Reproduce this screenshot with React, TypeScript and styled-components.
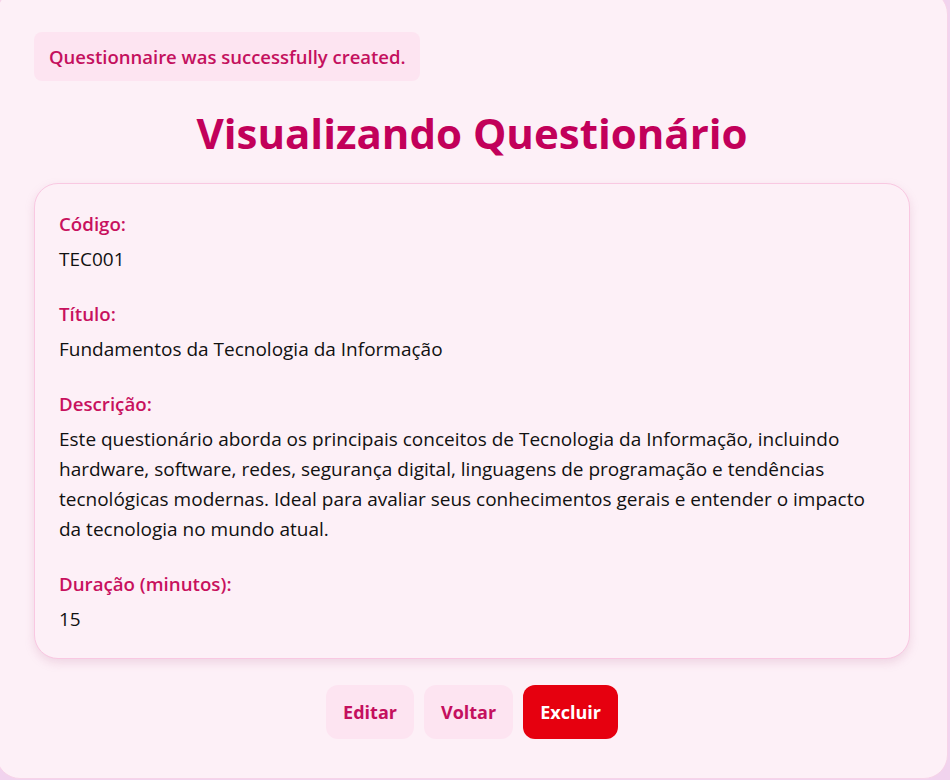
import React from "react";
import styled, { createGlobalStyle } from "styled-components";

const Global = createGlobalStyle`
  html, body { margin: 0; padding: 0; }
  body {
    background: #f1d3ee;
    font-family: "Open Sans", "Noto Sans", sans-serif;
    overflow: hidden;
  }
`;

const Page = styled.div`
  box-sizing: border-box;
  margin: -10px 0 0 -4px;
  width: 952px;
  height: 789px;
  background: #fdf0f7;
  border-radius: 24px;
  border: 1px solid #f7d3e8;
  padding: 41px 37px 0 37px;
  display: flex;
  flex-direction: column;
`;

const Notice = styled.div`
  align-self: flex-start;
  background: #fde4f1;
  color: #c4105e;
  font-size: 18.5px;
  font-weight: 600;
  border-radius: 8px;
  padding: 12px 14px 12px 15px;
  line-height: 25px;
`;

const Title = styled.h1`
  margin: 24px 0 22px;
  text-align: center;
  color: #c2005a;
  font-size: 42px;
  font-weight: 700;
  line-height: 56px;
`;

const Card = styled.div`
  box-sizing: border-box;
  background: #fdf0f7;
  border: 1px solid #f9c8e2;
  border-radius: 24px;
  box-shadow: 0 4px 10px rgba(190, 120, 160, 0.22);
  padding: 25px 24px 24px;
  display: flex;
  flex-direction: column;
  gap: 25px;
`;

const Field = styled.div`
  display: flex;
  flex-direction: column;
  gap: 5px;
`;

const Label = styled.div`
  color: #c8115e;
  font-size: 18.7px;
  font-weight: 600;
  line-height: 30px;
`;

const Value = styled.div`
  color: #111;
  font-size: 19px;
  line-height: 30px;
`;

const Actions = styled.div`
  display: flex;
  justify-content: center;
  gap: 10px;
  margin-top: 26px;
`;

const Button = styled.button<{ $danger?: boolean }>`
  font-family: inherit;
  font-size: 18px;
  font-weight: 700;
  height: 54px;
  padding: 0 17px;
  border: none;
  border-radius: 12px;
  cursor: pointer;
  background: ${(p) => (p.$danger ? "#e6000f" : "#fde4f1")};
  color: ${(p) => (p.$danger ? "#ffffff" : "#c4105e")};
`;

const fields: [string, string][] = [
  ["Código:", "TEC001"],
  ["Título:", "Fundamentos da Tecnologia da Informação"],
  [
    "Descrição:",
    "Este questionário aborda os principais conceitos de Tecnologia da Informação, incluindo hardware, software, redes, segurança digital, linguagens de programação e tendências tecnológicas modernas. Ideal para avaliar seus conhecimentos gerais e entender o impacto da tecnologia no mundo atual.",
  ],
  ["Duração (minutos):", "15"],
];

export default function App() {
  return (
    <>
      <Global />
      <Page>
        <Notice>Questionnaire was successfully created.</Notice>
        <Title>Visualizando Questionário</Title>
        <Card>
          {fields.map(([l, v]) => (
            <Field key={l}>
              <Label>{l}</Label>
              <Value>{v}</Value>
            </Field>
          ))}
        </Card>
        <Actions>
          <Button>Editar</Button>
          <Button>Voltar</Button>
          <Button $danger>Excluir</Button>
        </Actions>
      </Page>
    </>
  );
}
